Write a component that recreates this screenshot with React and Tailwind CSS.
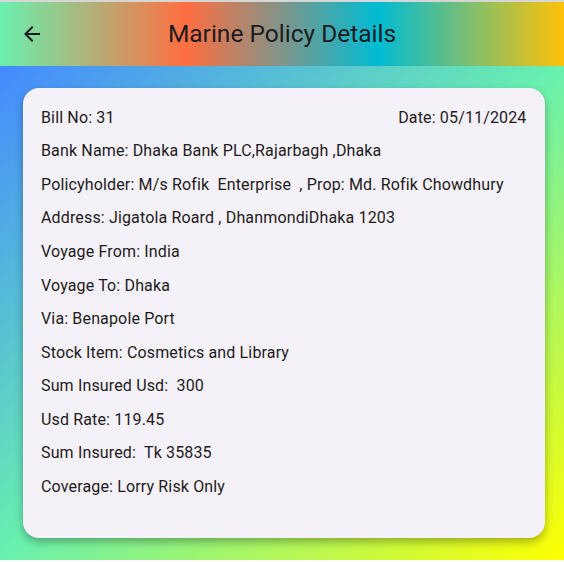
export default function App() {
  const rows = [
    'Bank Name: Dhaka Bank PLC,Rajarbagh ,Dhaka',
    'Policyholder: M/s Rofik  Enterprise  , Prop: Md. Rofik Chowdhury',
    'Address: Jigatola Roard , DhanmondiDhaka 1203',
    'Voyage From: India',
    'Voyage To: Dhaka',
    'Via: Benapole Port',
    'Stock Item: Cosmetics and Library',
    'Sum Insured Usd:  300',
    'Usd Rate: 119.45',
    'Sum Insured:  Tk 35835',
    'Coverage: Lorry Risk Only',
  ];

  return (
    <div className="w-[564px] h-[562px] bg-white font-['Roboto',sans-serif] text-[#1d1b20] flex flex-col">
      <div className="h-[2px] bg-[#d6d6d6]" />
      <div className="h-[64px] flex items-center bg-[linear-gradient(to_right,#69f0ae_0%,#ff6e40_33%,#00bcd4_67%,#ffc107_100%)]">
        <div className="w-[64px] flex">
          <svg width="24" height="24" viewBox="0 0 24 24" fill="#1d1b20" className="ml-[20px]">
            <path d="M20 11H7.83l5.59-5.59L12 4l-8 8 8 8 1.41-1.41L7.83 13H20v-2z" />
          </svg>
        </div>
        <div className="flex-1 text-center text-[24.5px] pr-[64px]">Marine Policy Details</div>
      </div>
      <div className="h-[494px] pl-[22.5px] pr-[19.5px] pt-[22px] whitespace-pre bg-[linear-gradient(to_bottom_right,#448aff_0%,#69f0ae_50%,#ffff00_100%)]">
        <div className="h-[450px] rounded-[16px] bg-[#f5f1f9] shadow-[0_4px_8px_rgba(0,0,0,0.3)] pl-[18.5px] pr-[18px] pt-[13px] text-[16px] tracking-[0.15px]">
          <div className="h-[33.55px] flex items-center justify-between">
            <span>Bill No: 31</span>
            <span>Date: 05/11/2024</span>
          </div>
          {rows.map((r) => (
            <div key={r} className="h-[33.55px] flex items-center">
              {r}
            </div>
          ))}
        </div>
      </div>
      <div className="h-[2px] bg-white" />
    </div>
  );
}
